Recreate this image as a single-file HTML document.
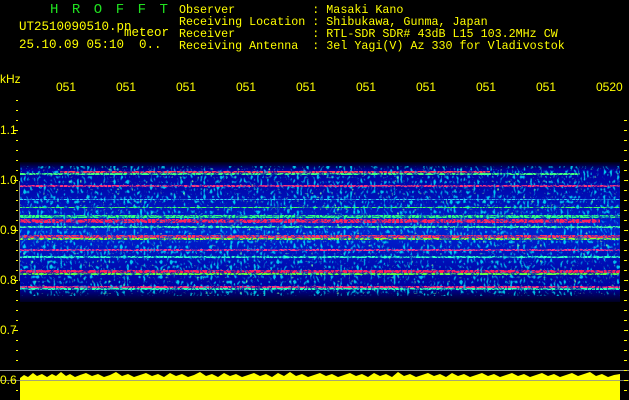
<!DOCTYPE html>
<html><head><meta charset="utf-8"><style>
body{margin:0;width:629px;height:400px;background:#000;overflow:hidden;position:relative;font-family:"Liberation Mono",monospace;color:#ffff00}
.t{position:absolute;font-size:11.7px;line-height:12px;white-space:pre}
.s{position:absolute;font-family:"Liberation Sans",sans-serif;font-size:12px;white-space:pre}
</style></head><body>
<svg width="629" height="400" style="position:absolute;left:0;top:0">
<defs>
<filter id="n1" x="0" y="0" width="100%" height="100%">
<feTurbulence type="turbulence" baseFrequency="0.3 0.2" numOctaves="1" seed="3"/>
<feColorMatrix type="matrix" values="0 0 0 0 0  0 0 0 0 0.9  0 0 0 0 1  4 0 0 0 -0.9"/>
</filter>
<filter id="n2" x="0" y="0" width="100%" height="100%">
<feTurbulence type="turbulence" baseFrequency="0.35 0.25" numOctaves="1" seed="11"/>
<feColorMatrix type="matrix" values="0 0 0 0 0.2  0 0 0 0 1  0 0 0 0 0.3  4 0 0 0 -1.6"/>
</filter>
<filter id="nm" x="0" y="0" width="100%" height="100%">
<feTurbulence type="turbulence" baseFrequency="0.25 0.3" numOctaves="1" seed="7"/>
<feColorMatrix type="matrix" values="0 0 0 0 1  0 0 0 0 1  0 0 0 0 1  5 0 0 0 0.1"/>
</filter>
<mask id="m"><rect x="0" y="0" width="629" height="400" fill="#fff" filter="url(#nm)"/></mask>
<linearGradient id="v" x1="0" y1="0" x2="0" y2="1">
<stop offset="0" stop-color="#000010"/><stop offset="0.06" stop-color="#0000a0"/><stop offset="0.5" stop-color="#0020d0"/><stop offset="0.9" stop-color="#0000a0"/><stop offset="1" stop-color="#000020"/>
</linearGradient>
</defs>
<rect x="20" y="162" width="600" height="140" fill="url(#v)"/>
<rect x="20" y="166" width="600" height="130" filter="url(#n1)" opacity="0.8"/>
<rect x="20" y="168" width="600" height="126" filter="url(#n2)" opacity="0.85"/>
<g mask="url(#m)">
<rect x="60" y="171" width="430" height="2" fill="#ff4060"/>
<rect x="20" y="173" width="560" height="2" fill="#40ff80"/>
<rect x="20" y="185" width="600" height="2" fill="#ff3080"/>
<rect x="20" y="199" width="600" height="1" fill="#30d0ff"/>
<rect x="20" y="207" width="600" height="1" fill="#40ff60"/>
<rect x="20" y="215" width="600" height="3" fill="#30ff80"/>
<rect x="20" y="219" width="580" height="4" fill="#ff2060"/>
<rect x="20" y="226" width="600" height="2" fill="#40ffa0"/>
<rect x="20" y="235" width="600" height="3" fill="#ff3060"/>
<rect x="20" y="238" width="600" height="2" fill="#80ff40"/>
<rect x="20" y="249" width="600" height="2" fill="#ff3090"/>
<rect x="20" y="256" width="600" height="2" fill="#30ffc0"/>
<rect x="20" y="270" width="600" height="3" fill="#ff2060"/>
<rect x="20" y="273" width="600" height="2" fill="#60ff40"/>
<rect x="20" y="286" width="600" height="2" fill="#ff3080"/>
<rect x="20" y="288" width="600" height="2" fill="#30ffb0"/>
</g>
<rect x="19" y="181" width="1" height="100" fill="#808080"/>
<rect x="0" y="370" width="629" height="1" fill="#909090"/>
<rect x="20" y="378" width="600" height="22" fill="#ffff00"/>
<path d="M20 378 L24 375 L28 377 L33 373 L37 376 L42 374 L47 377 L52 374 L56 376 L61 372 L66 376 L70 374 L75 377 L80 375 L86 373 L92 376 L98 374 L104 377 L110 375 L116 372 L122 376 L128 374 L134 377 L140 375 L146 373 L152 376 L158 374 L164 377 L170 373 L176 376 L182 374 L188 377 L194 375 L200 372 L206 376 L212 374 L218 377 L224 373 L230 376 L236 374 L242 377 L248 375 L254 373 L260 376 L266 374 L272 377 L278 373 L284 376 L290 372 L296 376 L302 374 L308 377 L314 375 L320 373 L326 376 L332 374 L338 377 L344 375 L350 373 L356 376 L362 374 L368 377 L374 373 L380 376 L386 374 L392 377 L398 372 L404 376 L410 374 L416 377 L422 375 L428 373 L434 376 L440 374 L446 377 L452 373 L458 376 L464 374 L470 377 L476 375 L482 373 L488 376 L494 374 L500 377 L506 375 L512 373 L518 376 L524 374 L530 377 L536 375 L542 373 L548 376 L554 374 L560 377 L566 375 L572 373 L578 376 L584 374 L590 372 L596 376 L602 374 L608 377 L614 375 L620 374 L620 379 L20 379Z" fill="#ffff00"/>
<rect x="0" y="380" width="629" height="1" fill="#909090" opacity=".8"/>
<g fill="#ffff00">
<rect x="14" y="130" width="4" height="1"/><rect x="14" y="180" width="4" height="1"/><rect x="14" y="230" width="4" height="1"/><rect x="14" y="280" width="4" height="1"/><rect x="14" y="330" width="4" height="1"/>
<rect x="16" y="160" width="2" height="1"/><rect x="16" y="170" width="2" height="1"/><rect x="16" y="190" width="2" height="1"/><rect x="16" y="200" width="2" height="1"/><rect x="16" y="210" width="2" height="1"/><rect x="16" y="220" width="2" height="1"/><rect x="16" y="240" width="2" height="1"/><rect x="16" y="250" width="2" height="1"/><rect x="16" y="260" width="2" height="1"/><rect x="16" y="270" width="2" height="1"/><rect x="16" y="290" width="2" height="1"/><rect x="16" y="300" width="2" height="1"/><rect x="16" y="310" width="2" height="1"/><rect x="16" y="320" width="2" height="1"/><rect x="16" y="340" width="2" height="1"/><rect x="16" y="350" width="2" height="1"/><rect x="16" y="360" width="2" height="1"/><rect x="16" y="390" width="2" height="1"/>
<rect x="16" y="100" width="2" height="1"/><rect x="16" y="110" width="2" height="1"/><rect x="16" y="120" width="2" height="1"/><rect x="16" y="140" width="2" height="1"/><rect x="16" y="150" width="2" height="1"/>
</g>
<g fill="#ffff00">
<rect x="624" y="120" width="3" height="1"/><rect x="624" y="130" width="3" height="1"/><rect x="624" y="140" width="3" height="1"/><rect x="624" y="150" width="3" height="1"/><rect x="624" y="160" width="3" height="1"/><rect x="624" y="170" width="3" height="1"/><rect x="624" y="180" width="4" height="1"/><rect x="624" y="190" width="3" height="1"/><rect x="624" y="200" width="3" height="1"/><rect x="624" y="210" width="3" height="1"/><rect x="624" y="220" width="3" height="1"/><rect x="624" y="230" width="4" height="1"/><rect x="624" y="240" width="3" height="1"/><rect x="624" y="250" width="3" height="1"/><rect x="624" y="260" width="3" height="1"/><rect x="624" y="270" width="3" height="1"/><rect x="624" y="280" width="4" height="1"/><rect x="624" y="290" width="3" height="1"/><rect x="624" y="300" width="3" height="1"/><rect x="624" y="310" width="3" height="1"/><rect x="624" y="320" width="3" height="1"/><rect x="624" y="330" width="4" height="1"/><rect x="624" y="340" width="3" height="1"/><rect x="624" y="350" width="3" height="1"/><rect x="624" y="360" width="3" height="1"/><rect x="624" y="370" width="3" height="1"/><rect x="624" y="380" width="4" height="1"/><rect x="624" y="390" width="3" height="1"/>
</g>
</svg>
<div class="t" style="left:50px;top:4px;color:#20e020;font-size:14px;letter-spacing:13.5px">HROFFT</div>
<div class="t" style="left:19px;top:21px;font-size:12.5px">UT2510090510.pn</div>
<div class="t" style="left:124px;top:27px;font-size:12.5px">meteor</div>
<div class="t" style="left:19px;top:39px;font-size:12.5px">25.10.09 05:10</div>
<div class="t" style="left:139px;top:39px;font-size:12.5px">0..</div>
<div class="t" style="left:179px;top:4px">Observer           : Masaki Kano
Receiving Location : Shibukawa, Gunma, Japan
Receiver           : RTL-SDR SDR# 43dB L15 103.2MHz CW
Receiving Antenna  : 3el Yagi(V) Az 330 for Vladivostok</div>
<div class="s" style="left:0;top:72px">kHz</div>
<div class="s" style="left:56px;top:80px">051</div>
<div class="s" style="left:116px;top:80px">051</div>
<div class="s" style="left:176px;top:80px">051</div>
<div class="s" style="left:236px;top:80px">051</div>
<div class="s" style="left:296px;top:80px">051</div>
<div class="s" style="left:356px;top:80px">051</div>
<div class="s" style="left:416px;top:80px">051</div>
<div class="s" style="left:476px;top:80px">051</div>
<div class="s" style="left:536px;top:80px">051</div>
<div class="s" style="left:596px;top:80px">0520</div>
<div class="s" style="left:0;top:123px">1.1</div>
<div class="s" style="left:0;top:173px">1.0</div>
<div class="s" style="left:0;top:223px">0.9</div>
<div class="s" style="left:0;top:273px">0.8</div>
<div class="s" style="left:0;top:323px">0.7</div>
<div class="s" style="left:0;top:373px">0.6</div>
</body></html>
